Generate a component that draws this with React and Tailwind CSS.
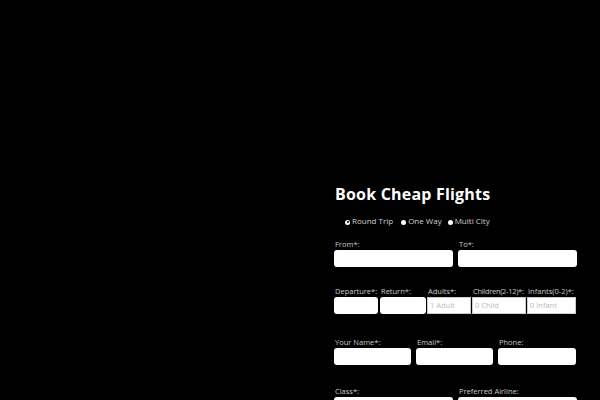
export default function App() {
  return (
    <div className="w-[600px] h-[400px] bg-black overflow-hidden text-white font-['Open_Sans',sans-serif]">
      <div className="ml-[334px] w-[243px] pt-[183px]">
        <h1 className="h-[22px] text-[16px] leading-[22px] font-bold pl-[1px] tracking-[0.2px]">Book Cheap Flights</h1>
        <div className="mt-[10px] h-[12px] flex items-center pl-[11px] text-[8px] text-[#d0d0d0] leading-[12px]">
          <span className="flex items-center">
            <span className="w-[5px] h-[5px] rounded-full bg-white flex items-center justify-center mt-[2px]"><span className="w-[2px] h-[2px] rounded-full bg-black"></span></span>
            <span className="ml-[2px]">Round Trip</span>
          </span>
          <span className="flex items-center ml-[8px]">
            <span className="w-[5px] h-[5px] rounded-full bg-white mt-[2px]"></span>
            <span className="ml-[2px]">One Way</span>
          </span>
          <span className="flex items-center ml-[6px]">
            <span className="w-[5px] h-[5px] rounded-full bg-white mt-[2px]"></span>
            <span className="ml-[2px]">Multi City</span>
          </span>
        </div>
        <div className="mt-[12px] flex gap-[5px]">
          <Field label="From*:" w="w-[119px]" />
          <Field label="To*:" w="w-[119px]" />
        </div>
        <div className="mt-[19px] flex">
          <Field label="Departure*:" w="w-[44px]" />
          <Field label="Return*:" w="w-[46px] ml-[2px]" />
          <Field label="Adults*:" w="w-[44px] ml-[1px]" ph="1 Adult" square />
          <Field label="Children(2-12)*:" w="w-[54px] ml-[1px]" ph="0 Child" square tight />
          <Field label="Infants(0-2)*:" w="w-[49px] ml-[1px]" ph="0 Infant" square />
        </div>
        <div className="mt-[23px] flex gap-[5px]">
          <Field label="Your Name*:" w="w-[77px]" />
          <Field label="Email*:" w="w-[77px]" />
          <Field label="Phone:" w="w-[78px]" />
        </div>
        <div className="mt-[21px] flex gap-[5px]">
          <Field label="Class*:" w="w-[119px]" />
          <Field label="Preferred Airline:" w="w-[119px]" />
        </div>
      </div>
    </div>
  );
}

function Field({ label, w, ph, square, tight }) {
  return (
    <div className={`${w} shrink-0 flex flex-col`}>
      <div className={`h-[10px] text-[7.5px] leading-[10px] text-[#c8c8c8] pl-[1px] whitespace-nowrap ${tight ? 'tracking-[-0.3px]' : ''}`}>{label}</div>
      <div className={`mt-[1px] h-[17px] bg-white ${square ? 'rounded-none border border-[#ccc]' : 'rounded-[3px]'} flex items-center px-[2px] text-[7.5px] text-[#bbb]`}>{ph || ''}</div>
    </div>
  );
}
